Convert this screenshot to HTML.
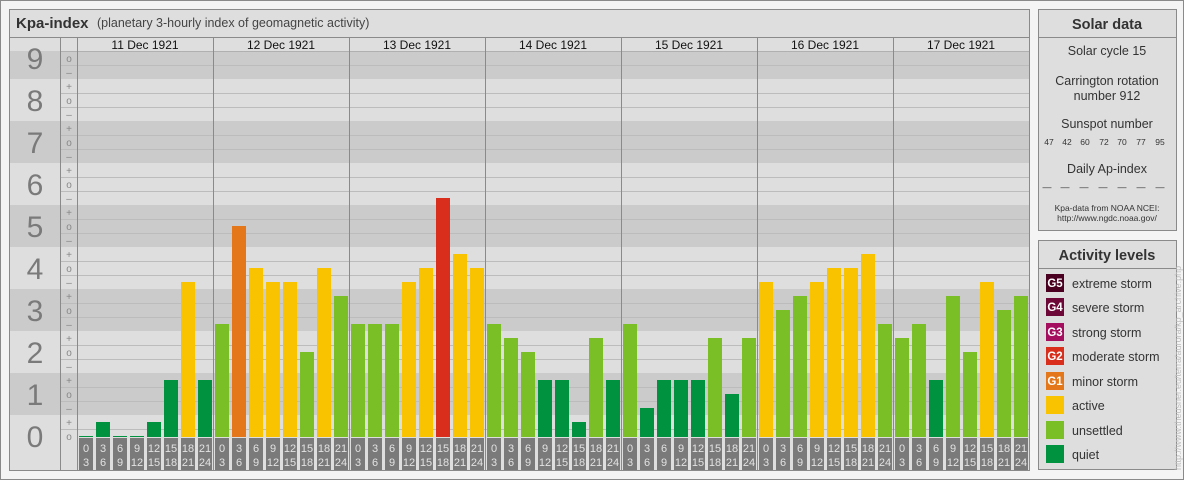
<!DOCTYPE html>
<html><head><meta charset="utf-8"><style>
html,body{margin:0;padding:0;background:#fff;}
svg{display:block;font-family:"Liberation Sans",sans-serif;}
</style></head><body>
<svg width="1184" height="480" viewBox="0 0 1184 480" xmlns="http://www.w3.org/2000/svg">
<rect x="0.5" y="0.5" width="1183" height="479" fill="#f4f4f4" stroke="#8a8a8a"/>
<!-- main panel -->
<rect x="9.5" y="9.5" width="1020" height="461" fill="#dedede" stroke="#8a8a8a"/>
<line x1="10" y1="37.5" x2="1029" y2="37.5" stroke="#8a8a8a"/>
<text x="16" y="28" font-size="15" font-weight="bold" fill="#333">Kpa-index</text>
<text x="97" y="27" font-size="12.5" fill="#444">(planetary 3-hourly index of geomagnetic activity)</text>
<!-- bands -->
<g fill="#cbcbcb">
<rect x="10" y="51" width="1019" height="28"/>
<rect x="10" y="121" width="1019" height="42"/>
<rect x="10" y="205" width="1019" height="42"/>
<rect x="10" y="289" width="1019" height="42"/>
<rect x="10" y="373" width="1019" height="42"/>
</g>
<rect x="10" y="38" width="1019" height="13" fill="#dedede"/>
<g stroke="#bcbcbc" stroke-width="1">
<line x1="60" x2="1029" y1="51.5" y2="51.5" stroke="#b0b0b0"/>
<line x1="60" x2="1029" y1="65.5" y2="65.5"/>
<line x1="60" x2="1029" y1="93.5" y2="93.5"/>
<line x1="60" x2="1029" y1="107.5" y2="107.5"/>
<line x1="60" x2="1029" y1="135.5" y2="135.5"/>
<line x1="60" x2="1029" y1="149.5" y2="149.5"/>
<line x1="60" x2="1029" y1="177.5" y2="177.5"/>
<line x1="60" x2="1029" y1="191.5" y2="191.5"/>
<line x1="60" x2="1029" y1="219.5" y2="219.5"/>
<line x1="60" x2="1029" y1="233.5" y2="233.5"/>
<line x1="60" x2="1029" y1="261.5" y2="261.5"/>
<line x1="60" x2="1029" y1="275.5" y2="275.5"/>
<line x1="60" x2="1029" y1="303.5" y2="303.5"/>
<line x1="60" x2="1029" y1="317.5" y2="317.5"/>
<line x1="60" x2="1029" y1="345.5" y2="345.5"/>
<line x1="60" x2="1029" y1="359.5" y2="359.5"/>
<line x1="60" x2="1029" y1="387.5" y2="387.5"/>
<line x1="60" x2="1029" y1="401.5" y2="401.5"/>
<line x1="60" x2="1029" y1="429.5" y2="429.5"/>
</g>
<g stroke="#8a8a8a">
<line x1="60.5" y1="38" x2="60.5" y2="470"/>
<line x1="77.5" y1="38" x2="77.5" y2="470"/>
<line x1="213.5" y1="38" x2="213.5" y2="470"/>
<line x1="349.5" y1="38" x2="349.5" y2="470"/>
<line x1="485.5" y1="38" x2="485.5" y2="470"/>
<line x1="621.5" y1="38" x2="621.5" y2="470"/>
<line x1="757.5" y1="38" x2="757.5" y2="470"/>
<line x1="893.5" y1="38" x2="893.5" y2="470"/>
</g>
<!-- big numbers -->
<g font-size="30" fill="#7a7a7a" text-anchor="middle">
<text x="35" y="69">9</text><text x="35" y="111">8</text><text x="35" y="153">7</text>
<text x="35" y="195">6</text><text x="35" y="237">5</text><text x="35" y="279">4</text>
<text x="35" y="321">3</text><text x="35" y="363">2</text><text x="35" y="405">1</text>
<text x="35" y="447">0</text>
</g>
<!-- minor labels -->
<g font-size="10" fill="#888" text-anchor="middle">
<text x="69" y="62">o</text><text x="69" y="76">–</text>
<text x="69" y="90">+</text><text x="69" y="104">o</text><text x="69" y="118">–</text>
<text x="69" y="132">+</text><text x="69" y="146">o</text><text x="69" y="160">–</text>
<text x="69" y="174">+</text><text x="69" y="188">o</text><text x="69" y="202">–</text>
<text x="69" y="216">+</text><text x="69" y="230">o</text><text x="69" y="244">–</text>
<text x="69" y="258">+</text><text x="69" y="272">o</text><text x="69" y="286">–</text>
<text x="69" y="300">+</text><text x="69" y="314">o</text><text x="69" y="328">–</text>
<text x="69" y="342">+</text><text x="69" y="356">o</text><text x="69" y="370">–</text>
<text x="69" y="384">+</text><text x="69" y="398">o</text><text x="69" y="412">–</text>
<text x="69" y="426">+</text><text x="69" y="440">o</text>
</g>
<!-- day labels -->
<g font-size="12" fill="#111" text-anchor="middle">
<text x="145" y="49">11 Dec 1921</text><text x="281" y="49">12 Dec 1921</text>
<text x="417" y="49">13 Dec 1921</text><text x="553" y="49">14 Dec 1921</text>
<text x="689" y="49">15 Dec 1921</text><text x="825" y="49">16 Dec 1921</text>
<text x="961" y="49">17 Dec 1921</text>
</g>
<!-- bars -->
<g>
<!-- D1: 0,1,0,0,1,4,11,4 -->
<rect x="79" y="436" width="14" height="1" fill="#00923f"/>
<rect x="96" y="422" width="14" height="15" fill="#00923f"/>
<rect x="113" y="436" width="14" height="1" fill="#00923f"/>
<rect x="130" y="436" width="14" height="1" fill="#00923f"/>
<rect x="147" y="422" width="14" height="15" fill="#00923f"/>
<rect x="164" y="380" width="14" height="57" fill="#00923f"/>
<rect x="181" y="282" width="14" height="155" fill="#f9c300"/>
<rect x="198" y="380" width="14" height="57" fill="#00923f"/>
<!-- D2: 8,15,12,11,11,6,12,10 -->
<rect x="215" y="324" width="14" height="113" fill="#7bbf26"/>
<rect x="232" y="226" width="14" height="211" fill="#e37719"/>
<rect x="249" y="268" width="14" height="169" fill="#f9c300"/>
<rect x="266" y="282" width="14" height="155" fill="#f9c300"/>
<rect x="283" y="282" width="14" height="155" fill="#f9c300"/>
<rect x="300" y="352" width="14" height="85" fill="#7bbf26"/>
<rect x="317" y="268" width="14" height="169" fill="#f9c300"/>
<rect x="334" y="296" width="14" height="141" fill="#7bbf26"/>
<!-- D3: 8,8,8,11,12,17,13,12 -->
<rect x="351" y="324" width="14" height="113" fill="#7bbf26"/>
<rect x="368" y="324" width="14" height="113" fill="#7bbf26"/>
<rect x="385" y="324" width="14" height="113" fill="#7bbf26"/>
<rect x="402" y="282" width="14" height="155" fill="#f9c300"/>
<rect x="419" y="268" width="14" height="169" fill="#f9c300"/>
<rect x="436" y="198" width="14" height="239" fill="#d92e1c"/>
<rect x="453" y="254" width="14" height="183" fill="#f9c300"/>
<rect x="470" y="268" width="14" height="169" fill="#f9c300"/>
<!-- D4: 8,7,6,4,4,1,7,4 -->
<rect x="487" y="324" width="14" height="113" fill="#7bbf26"/>
<rect x="504" y="338" width="14" height="99" fill="#7bbf26"/>
<rect x="521" y="352" width="14" height="85" fill="#7bbf26"/>
<rect x="538" y="380" width="14" height="57" fill="#00923f"/>
<rect x="555" y="380" width="14" height="57" fill="#00923f"/>
<rect x="572" y="422" width="14" height="15" fill="#00923f"/>
<rect x="589" y="338" width="14" height="99" fill="#7bbf26"/>
<rect x="606" y="380" width="14" height="57" fill="#00923f"/>
<!-- D5: 8,2,4,4,4,7,3,7 -->
<rect x="623" y="324" width="14" height="113" fill="#7bbf26"/>
<rect x="640" y="408" width="14" height="29" fill="#00923f"/>
<rect x="657" y="380" width="14" height="57" fill="#00923f"/>
<rect x="674" y="380" width="14" height="57" fill="#00923f"/>
<rect x="691" y="380" width="14" height="57" fill="#00923f"/>
<rect x="708" y="338" width="14" height="99" fill="#7bbf26"/>
<rect x="725" y="394" width="14" height="43" fill="#00923f"/>
<rect x="742" y="338" width="14" height="99" fill="#7bbf26"/>
<!-- D6: 11,9,10,11,12,12,13,8 -->
<rect x="759" y="282" width="14" height="155" fill="#f9c300"/>
<rect x="776" y="310" width="14" height="127" fill="#7bbf26"/>
<rect x="793" y="296" width="14" height="141" fill="#7bbf26"/>
<rect x="810" y="282" width="14" height="155" fill="#f9c300"/>
<rect x="827" y="268" width="14" height="169" fill="#f9c300"/>
<rect x="844" y="268" width="14" height="169" fill="#f9c300"/>
<rect x="861" y="254" width="14" height="183" fill="#f9c300"/>
<rect x="878" y="324" width="14" height="113" fill="#7bbf26"/>
<!-- D7: 7,8,4,10,6,11,9,10 -->
<rect x="895" y="338" width="14" height="99" fill="#7bbf26"/>
<rect x="912" y="324" width="14" height="113" fill="#7bbf26"/>
<rect x="929" y="380" width="14" height="57" fill="#00923f"/>
<rect x="946" y="296" width="14" height="141" fill="#7bbf26"/>
<rect x="963" y="352" width="14" height="85" fill="#7bbf26"/>
<rect x="980" y="282" width="14" height="155" fill="#f9c300"/>
<rect x="997" y="310" width="14" height="127" fill="#7bbf26"/>
<rect x="1014" y="296" width="14" height="141" fill="#7bbf26"/>
</g>
<!-- bottom hour labels -->
<g id="hrs">
<g transform="translate(77,0)">
<g fill="#7a7a7a"><rect x="2" y="438" width="14" height="32"/><rect x="19" y="438" width="14" height="32"/><rect x="36" y="438" width="14" height="32"/><rect x="53" y="438" width="14" height="32"/><rect x="70" y="438" width="14" height="32"/><rect x="87" y="438" width="14" height="32"/><rect x="104" y="438" width="14" height="32"/><rect x="121" y="438" width="14" height="32"/></g>
<g font-size="11" fill="#e2e2e2" text-anchor="middle"><text y="452"><tspan x="9">0</tspan><tspan x="26">3</tspan><tspan x="43">6</tspan><tspan x="60">9</tspan><tspan x="77">12</tspan><tspan x="94">15</tspan><tspan x="111">18</tspan><tspan x="128">21</tspan></text><text y="466"><tspan x="9">3</tspan><tspan x="26">6</tspan><tspan x="43">9</tspan><tspan x="60">12</tspan><tspan x="77">15</tspan><tspan x="94">18</tspan><tspan x="111">21</tspan><tspan x="128">24</tspan></text></g>
</g>
<g transform="translate(213,0)">
<g fill="#7a7a7a"><rect x="2" y="438" width="14" height="32"/><rect x="19" y="438" width="14" height="32"/><rect x="36" y="438" width="14" height="32"/><rect x="53" y="438" width="14" height="32"/><rect x="70" y="438" width="14" height="32"/><rect x="87" y="438" width="14" height="32"/><rect x="104" y="438" width="14" height="32"/><rect x="121" y="438" width="14" height="32"/></g>
<g font-size="11" fill="#e2e2e2" text-anchor="middle"><text y="452"><tspan x="9">0</tspan><tspan x="26">3</tspan><tspan x="43">6</tspan><tspan x="60">9</tspan><tspan x="77">12</tspan><tspan x="94">15</tspan><tspan x="111">18</tspan><tspan x="128">21</tspan></text><text y="466"><tspan x="9">3</tspan><tspan x="26">6</tspan><tspan x="43">9</tspan><tspan x="60">12</tspan><tspan x="77">15</tspan><tspan x="94">18</tspan><tspan x="111">21</tspan><tspan x="128">24</tspan></text></g>
</g>
<g transform="translate(349,0)">
<g fill="#7a7a7a"><rect x="2" y="438" width="14" height="32"/><rect x="19" y="438" width="14" height="32"/><rect x="36" y="438" width="14" height="32"/><rect x="53" y="438" width="14" height="32"/><rect x="70" y="438" width="14" height="32"/><rect x="87" y="438" width="14" height="32"/><rect x="104" y="438" width="14" height="32"/><rect x="121" y="438" width="14" height="32"/></g>
<g font-size="11" fill="#e2e2e2" text-anchor="middle"><text y="452"><tspan x="9">0</tspan><tspan x="26">3</tspan><tspan x="43">6</tspan><tspan x="60">9</tspan><tspan x="77">12</tspan><tspan x="94">15</tspan><tspan x="111">18</tspan><tspan x="128">21</tspan></text><text y="466"><tspan x="9">3</tspan><tspan x="26">6</tspan><tspan x="43">9</tspan><tspan x="60">12</tspan><tspan x="77">15</tspan><tspan x="94">18</tspan><tspan x="111">21</tspan><tspan x="128">24</tspan></text></g>
</g>
<g transform="translate(485,0)">
<g fill="#7a7a7a"><rect x="2" y="438" width="14" height="32"/><rect x="19" y="438" width="14" height="32"/><rect x="36" y="438" width="14" height="32"/><rect x="53" y="438" width="14" height="32"/><rect x="70" y="438" width="14" height="32"/><rect x="87" y="438" width="14" height="32"/><rect x="104" y="438" width="14" height="32"/><rect x="121" y="438" width="14" height="32"/></g>
<g font-size="11" fill="#e2e2e2" text-anchor="middle"><text y="452"><tspan x="9">0</tspan><tspan x="26">3</tspan><tspan x="43">6</tspan><tspan x="60">9</tspan><tspan x="77">12</tspan><tspan x="94">15</tspan><tspan x="111">18</tspan><tspan x="128">21</tspan></text><text y="466"><tspan x="9">3</tspan><tspan x="26">6</tspan><tspan x="43">9</tspan><tspan x="60">12</tspan><tspan x="77">15</tspan><tspan x="94">18</tspan><tspan x="111">21</tspan><tspan x="128">24</tspan></text></g>
</g>
<g transform="translate(621,0)">
<g fill="#7a7a7a"><rect x="2" y="438" width="14" height="32"/><rect x="19" y="438" width="14" height="32"/><rect x="36" y="438" width="14" height="32"/><rect x="53" y="438" width="14" height="32"/><rect x="70" y="438" width="14" height="32"/><rect x="87" y="438" width="14" height="32"/><rect x="104" y="438" width="14" height="32"/><rect x="121" y="438" width="14" height="32"/></g>
<g font-size="11" fill="#e2e2e2" text-anchor="middle"><text y="452"><tspan x="9">0</tspan><tspan x="26">3</tspan><tspan x="43">6</tspan><tspan x="60">9</tspan><tspan x="77">12</tspan><tspan x="94">15</tspan><tspan x="111">18</tspan><tspan x="128">21</tspan></text><text y="466"><tspan x="9">3</tspan><tspan x="26">6</tspan><tspan x="43">9</tspan><tspan x="60">12</tspan><tspan x="77">15</tspan><tspan x="94">18</tspan><tspan x="111">21</tspan><tspan x="128">24</tspan></text></g>
</g>
<g transform="translate(757,0)">
<g fill="#7a7a7a"><rect x="2" y="438" width="14" height="32"/><rect x="19" y="438" width="14" height="32"/><rect x="36" y="438" width="14" height="32"/><rect x="53" y="438" width="14" height="32"/><rect x="70" y="438" width="14" height="32"/><rect x="87" y="438" width="14" height="32"/><rect x="104" y="438" width="14" height="32"/><rect x="121" y="438" width="14" height="32"/></g>
<g font-size="11" fill="#e2e2e2" text-anchor="middle"><text y="452"><tspan x="9">0</tspan><tspan x="26">3</tspan><tspan x="43">6</tspan><tspan x="60">9</tspan><tspan x="77">12</tspan><tspan x="94">15</tspan><tspan x="111">18</tspan><tspan x="128">21</tspan></text><text y="466"><tspan x="9">3</tspan><tspan x="26">6</tspan><tspan x="43">9</tspan><tspan x="60">12</tspan><tspan x="77">15</tspan><tspan x="94">18</tspan><tspan x="111">21</tspan><tspan x="128">24</tspan></text></g>
</g>
<g transform="translate(893,0)">
<g fill="#7a7a7a"><rect x="2" y="438" width="14" height="32"/><rect x="19" y="438" width="14" height="32"/><rect x="36" y="438" width="14" height="32"/><rect x="53" y="438" width="14" height="32"/><rect x="70" y="438" width="14" height="32"/><rect x="87" y="438" width="14" height="32"/><rect x="104" y="438" width="14" height="32"/><rect x="121" y="438" width="14" height="32"/></g>
<g font-size="11" fill="#e2e2e2" text-anchor="middle"><text y="452"><tspan x="9">0</tspan><tspan x="26">3</tspan><tspan x="43">6</tspan><tspan x="60">9</tspan><tspan x="77">12</tspan><tspan x="94">15</tspan><tspan x="111">18</tspan><tspan x="128">21</tspan></text><text y="466"><tspan x="9">3</tspan><tspan x="26">6</tspan><tspan x="43">9</tspan><tspan x="60">12</tspan><tspan x="77">15</tspan><tspan x="94">18</tspan><tspan x="111">21</tspan><tspan x="128">24</tspan></text></g>
</g>
</g>
<!-- Solar data panel -->
<rect x="1038.5" y="9.5" width="138" height="221" fill="#dedede" stroke="#8a8a8a"/>
<line x1="1039" y1="37.5" x2="1176" y2="37.5" stroke="#8a8a8a"/>
<g text-anchor="middle" fill="#333">
<text x="1107" y="29" font-size="14.5" font-weight="bold">Solar data</text>
<text x="1107" y="55" font-size="12.5">Solar cycle 15</text>
<text x="1107" y="85" font-size="12.5">Carrington rotation</text>
<text x="1107" y="100" font-size="12.5">number 912</text>
<text x="1107" y="128" font-size="12.5">Sunspot number</text>
<g font-size="8.5"><text x="1049" y="145">47</text><text x="1067" y="145">42</text><text x="1085" y="145">60</text><text x="1104" y="145">72</text><text x="1122" y="145">70</text><text x="1141" y="145">77</text><text x="1160" y="145">95</text></g>
<text x="1107" y="173" font-size="12.5">Daily Ap-index</text>
<g font-size="9"><text x="1047" y="190">—</text><text x="1065" y="190">—</text><text x="1084" y="190">—</text><text x="1103" y="190">—</text><text x="1122" y="190">—</text><text x="1141" y="190">—</text><text x="1160" y="190">—</text></g>
<text x="1107" y="211" font-size="8.5">Kpa-data from NOAA NCEI:</text>
<text x="1107" y="221" font-size="8.5">http://www.ngdc.noaa.gov/</text>
</g>
<!-- Activity levels panel -->
<rect x="1038.5" y="240.5" width="138" height="229" fill="#dedede" stroke="#8a8a8a"/>
<line x1="1039" y1="268.5" x2="1176" y2="268.5" stroke="#8a8a8a"/>
<text x="1107" y="260" font-size="14.5" font-weight="bold" fill="#333" text-anchor="middle">Activity levels</text>
<g>
<rect x="1046" y="274" width="18" height="18" fill="#4a0020"/>
<rect x="1046" y="298" width="18" height="18" fill="#6c0737"/>
<rect x="1046" y="323" width="18" height="18" fill="#a50d5e"/>
<rect x="1046" y="347" width="18" height="18" fill="#d92e1c"/>
<rect x="1046" y="372" width="18" height="18" fill="#e37719"/>
<rect x="1046" y="396" width="18" height="18" fill="#f9c300"/>
<rect x="1046" y="421" width="18" height="18" fill="#7bbf26"/>
<rect x="1046" y="445" width="18" height="18" fill="#00923f"/>
</g>
<g font-size="11.5" fill="#fff" font-weight="bold" text-anchor="middle">
<text x="1055" y="287">G5</text><text x="1055" y="311">G4</text><text x="1055" y="336">G3</text>
<text x="1055" y="360">G2</text><text x="1055" y="385">G1</text>
</g>
<g font-size="12.5" fill="#333">
<text x="1072" y="288">extreme storm</text>
<text x="1072" y="312">severe storm</text>
<text x="1072" y="337">strong storm</text>
<text x="1072" y="361">moderate storm</text>
<text x="1072" y="386">minor storm</text>
<text x="1072" y="410">active</text>
<text x="1072" y="435">unsettled</text>
<text x="1072" y="459">quiet</text>
</g>
<text transform="translate(1181,470) rotate(-90)" font-size="9" fill="#bdbdbd">http://www.theusner.eu/terra/aurora/kp_archive.php</text>
</svg>
</body></html>
